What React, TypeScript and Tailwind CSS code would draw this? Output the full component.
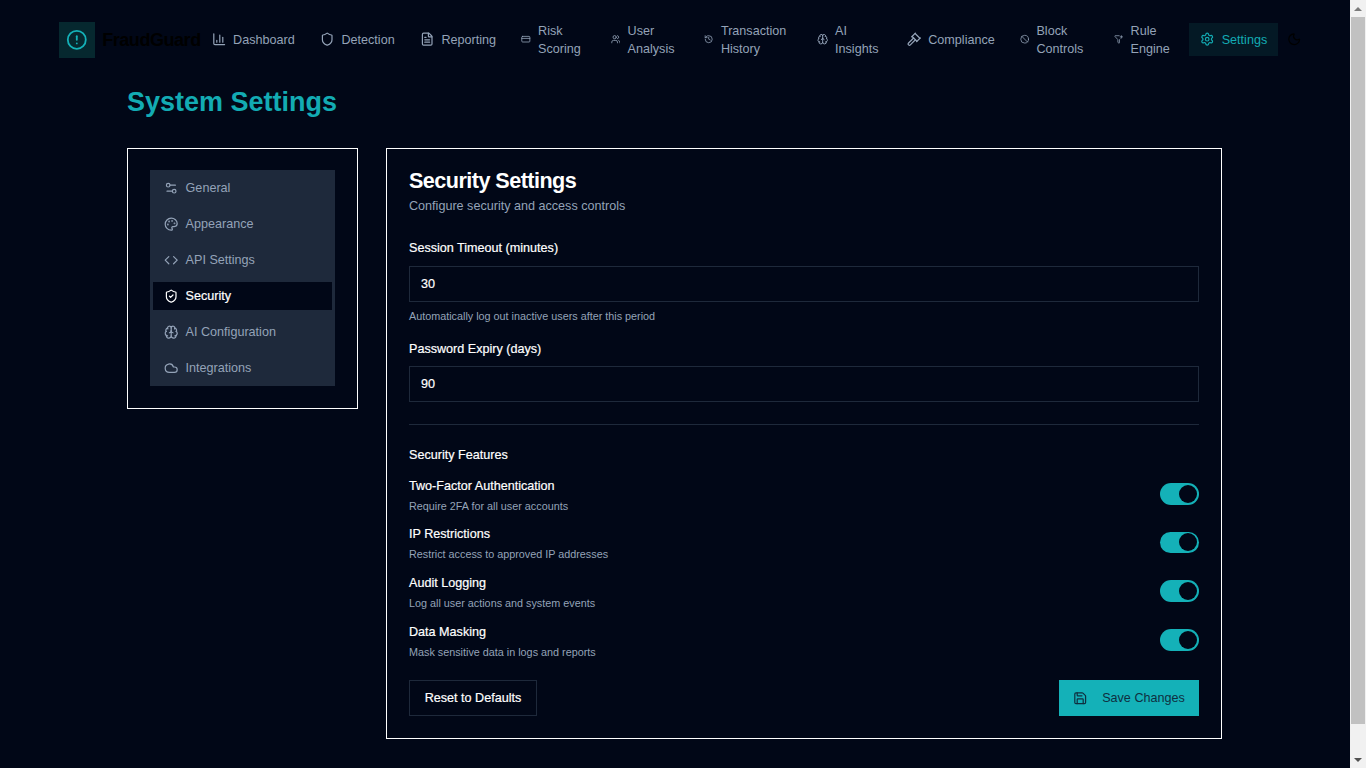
import React from "react";
import {
  Ban,
  Brain,
  ChartColumn,
  CircleAlert,
  Cloud,
  Code,
  CreditCard,
  FileText,
  FunnelPlus,
  Gavel,
  History,
  Moon,
  Palette,
  Save,
  Settings,
  Settings2,
  Shield,
  ShieldCheck,
  Users,
} from "lucide-react";

const navItems = [
  { label: "Dashboard", icon: ChartColumn },
  { label: "Detection", icon: Shield },
  { label: "Reporting", icon: FileText },
  { label: "Risk Scoring", icon: CreditCard },
  { label: "User Analysis", icon: Users },
  { label: "Transaction History", icon: History },
  { label: "AI Insights", icon: Brain },
  { label: "Compliance", icon: Gavel },
  { label: "Block Controls", icon: Ban },
  { label: "Rule Engine", icon: FunnelPlus },
];

const sideItems = [
  { label: "General", icon: Settings2 },
  { label: "Appearance", icon: Palette },
  { label: "API Settings", icon: Code },
  { label: "Security", icon: ShieldCheck, active: true },
  { label: "AI Configuration", icon: Brain },
  { label: "Integrations", icon: Cloud },
];

const features = [
  { title: "Two-Factor Authentication", desc: "Require 2FA for all user accounts" },
  { title: "IP Restrictions", desc: "Restrict access to approved IP addresses" },
  { title: "Audit Logging", desc: "Log all user actions and system events" },
  { title: "Data Masking", desc: "Mask sensitive data in logs and reports" },
];

function Toggle() {
  return (
    <div className="mb-[3.8px] flex h-[21.6px] w-[39px] shrink-0 items-center justify-end rounded-full bg-[#14b1b8] pr-[2px]">
      <span className="size-[18px] rounded-full bg-[#010717]" />
    </div>
  );
}

export default function App() {
  return (
    <div
      className="flex h-screen overflow-hidden bg-[#010717] text-[12.6px] text-white"
      style={{ fontFamily: '"Liberation Sans", Arial, sans-serif' }}
    >
      <div className="w-[1350px] shrink-0">
        <header className="mx-auto flex h-[80px] w-[1280px] items-center px-6">
          <div className="flex shrink-0 items-center gap-[7.2px]">
            <div className="flex size-9 shrink-0 items-center justify-center bg-[#06282f]">
              <CircleAlert className="size-[21.6px] text-[#14b1b8]" />
            </div>
            <span className="text-lg font-bold tracking-[-0.45px] text-black">FraudGuard</span>
          </div>
          <nav className="mb-[1px] flex w-[1077.3px] shrink-0 items-center gap-[3.6px]">
            {navItems.map((item) => (
              <a key={item.label} className="flex items-center gap-[7.2px] px-[10.8px] py-[7.2px] leading-[18px] text-[#94a3b8]">
                <item.icon className="size-[14.4px]" />
                <span>{item.label}</span>
              </a>
            ))}
            <a className="flex items-center gap-[7.2px] bg-[#041925] px-[10.8px] py-[7.2px] leading-[18px] text-[#13abb3]">
              <Settings className="size-[14.4px]" />
              <span>Settings</span>
            </a>
          </nav>
          <Moon className="mb-[1px] ml-[9px] size-[14.4px] shrink-0 text-black" />
        </header>

        <main className="ml-[127px] w-[1095px]">
          <h1 className="-mt-[1px] text-[27px] leading-[46px] font-bold text-[#13abb3]">System Settings</h1>
          <div className="mt-[23px] flex items-start gap-7">
            <aside className="w-[231px] shrink-0 border border-white px-[22px] pt-[21px] pb-[22px]">
              <ul className="w-[185px] bg-[#1e293b]">
                {sideItems.map((item) => (
                  <li key={item.label} className="flex h-9 items-center px-[3px]">
                    <div className={`flex h-7 w-full items-center gap-[7.2px] pl-[11px] ${item.active ? "bg-[#010717] text-white [-webkit-text-stroke:0.2px]" : "text-[#94a3b8]"}`}>
                      <item.icon className="size-[14.4px] shrink-0" />
                      <span>{item.label}</span>
                    </div>
                  </li>
                ))}
              </ul>
            </aside>

            <section className="h-[591px] w-[836px] shrink-0 border border-white px-[22px] pt-[17px]">
              <h2 className="text-[21.6px] leading-[30px] font-bold tracking-[-0.54px]">Security Settings</h2>
              <p className="leading-[20px] text-[#94a3b8]">Configure security and access controls</p>

              <label className="mt-[22px] block leading-[20px] [-webkit-text-stroke:0.2px]">Session Timeout (minutes)</label>
              <div className="mt-[8px] flex h-9 items-center border border-[#1e293b] px-[11px] [-webkit-text-stroke:0.2px]">30</div>
              <p className="mt-[8px] text-[10.8px] leading-[12px] text-[#94a3b8]">Automatically log out inactive users after this period</p>

              <label className="mt-[17px] block leading-[20px] [-webkit-text-stroke:0.2px]">Password Expiry (days)</label>
              <div className="mt-[7px] flex h-9 items-center border border-[#1e293b] px-[11px] [-webkit-text-stroke:0.2px]">90</div>

              <div className="mt-[22px] border-t border-[#1e293b]" />

              <h3 className="mt-[20px] leading-[20px] [-webkit-text-stroke:0.2px]">Security Features</h3>
              <div className="mt-[6.4px] flex flex-col">
                {features.map((f) => (
                  <div key={f.title} className="flex h-[48.67px] items-center justify-between">
                    <div>
                      <div className="leading-[20px] [-webkit-text-stroke:0.2px]">{f.title}</div>
                      <div className="text-[10.8px] leading-[20px] text-[#94a3b8]">{f.desc}</div>
                    </div>
                    <Toggle />
                  </div>
                ))}
              </div>

              <div className="mt-[13.6px] flex items-center justify-between">
                <button className="h-9 w-[128px] border border-[#1e293b] pt-[1px] text-white [-webkit-text-stroke:0.2px]">Reset to Defaults</button>
                <button className="flex h-9 w-[140px] items-center gap-[14.4px] bg-[#14b1b8] pt-[1px] pl-[14.4px] text-[#0f2f3f]">
                  <Save className="size-[14.4px] shrink-0" />
                  <span>Save Changes</span>
                </button>
              </div>
            </section>
          </div>
        </main>
      </div>

      <div className="flex w-4 shrink-0 flex-col bg-[#f1f1f1]">
        <svg className="size-4 shrink-0" viewBox="0 0 16 16">
          <polygon points="4,11 12,11 8,7" fill="#7a7a7a" />
        </svg>
        <div className="mx-[1px] mt-[1px] h-[707px] bg-[#c1c1c1]" />
        <div className="flex-1" />
        <svg className="size-4 shrink-0" viewBox="0 0 16 16">
          <polygon points="4,6 12,6 8,10" fill="#505050" />
        </svg>
      </div>
    </div>
  );
}
